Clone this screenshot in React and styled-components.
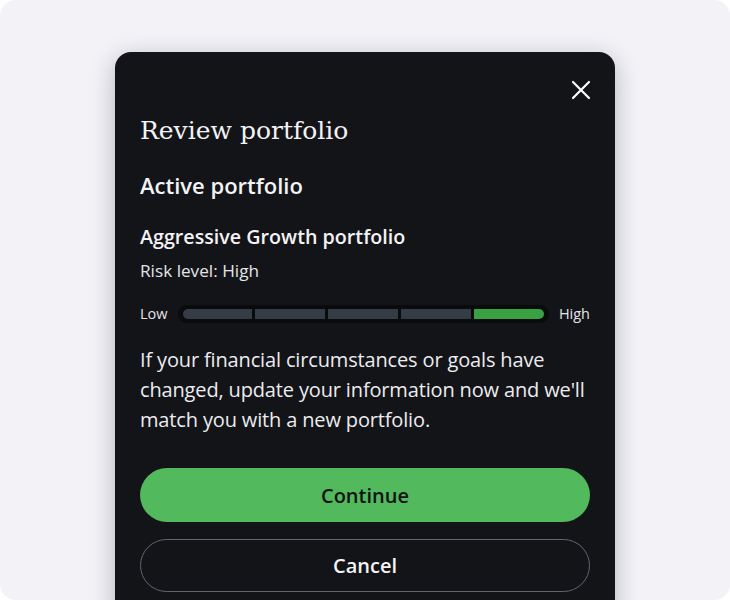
import React from "react";
import styled, { createGlobalStyle } from "styled-components";

const Global = createGlobalStyle`
  html, body { margin: 0; padding: 0; background: #ffffff; }
  * { box-sizing: border-box; }
`;

const Frame = styled.div`
  width: 730px;
  height: 600px;
  background: #f2f2f7;
  border-radius: 16px;
  overflow: hidden;
  display: flex;
  justify-content: center;
  padding-top: 52px;
  font-family: "Open Sans", "Noto Sans", sans-serif;
`;

const Card = styled.div`
  width: 500px;
  height: 600px;
  flex-shrink: 0;
  background: #131418;
  border-radius: 16px;
  padding: 28px 25px 0 25px;
  box-shadow: 0 6px 24px rgba(20, 20, 40, 0.28);
  display: flex;
  flex-direction: column;
  color: #f3f3f5;
`;

const CloseRow = styled.div`
  display: flex;
  justify-content: flex-end;
  height: 20px;
`;

const CloseButton = styled.button`
  width: 20px;
  height: 20px;
  padding: 0;
  margin: 0;
  margin-right: -1px;
  border: none;
  background: transparent;
  display: flex;
  align-items: center;
  justify-content: center;
  color: #ffffff;
  cursor: pointer;
`;

const Title = styled.h1`
  margin: 14px 0 0 0;
  font-family: "DejaVu Serif", "Liberation Serif", serif;
  font-weight: 400;
  font-size: 25px;
  line-height: 34px;
  color: #f3f3f5;
`;

const Subtitle = styled.h2`
  margin: 23px 0 0 0;
  font-size: 22px;
  line-height: 28px;
  font-weight: 600;
`;

const PortfolioName = styled.h3`
  margin: 25px 0 0 0;
  font-size: 19.7px;
  line-height: 26px;
  font-weight: 600;
`;

const RiskText = styled.div`
  margin-top: 10px;
  font-size: 17.2px;
  line-height: 22px;
  color: #e4e4e8;
`;

const MeterRow = styled.div`
  margin-top: 23px;
  display: flex;
  align-items: center;
  gap: 10px;
  height: 18px;
`;

const MeterLabel = styled.span`
  font-size: 14.5px;
  line-height: 18px;
  color: #e4e4e8;
`;

const Track = styled.div`
  flex: 1;
  height: 18px;
  border-radius: 9px;
  background: #0a0b0d;
  padding: 4px 5px;
  display: flex;
  gap: 3px;
`;

const Segment = styled.div`
  flex: 1;
  height: 10px;
  background: ${(p) => (p.$active ? "#3aa142" : "#363c46")};
  border-radius: ${(p) => (p.$first ? "5px 0 0 5px" : p.$last ? "0 5px 5px 0" : "0")};
`;

const Paragraph = styled.p`
  margin: 22px 0 0 0;
  font-size: 20px;
  letter-spacing: -0.15px;
  line-height: 30px;
  color: #ececef;
`;

const PrimaryButton = styled.button`
  margin-top: 33px;
  height: 54px;
  width: 100%;
  border: none;
  border-radius: 27px;
  background: #52b95c;
  color: #111214;
  font-family: "Open Sans", "Noto Sans", sans-serif;
  font-size: 20px;
  font-weight: 600;
  cursor: pointer;
`;

const SecondaryButton = styled.button`
  margin-top: 17px;
  height: 53px;
  width: 100%;
  border: 1px solid #5f6672;
  border-radius: 27px;
  background: transparent;
  color: #f3f3f5;
  font-family: "Open Sans", "Noto Sans", sans-serif;
  font-size: 20px;
  font-weight: 600;
  cursor: pointer;
`;

const segments = [0, 1, 2, 3, 4];

export default function App() {
  return (
    <>
      <Global />
      <Frame>
        <Card>
          <CloseRow>
            <CloseButton aria-label="Close">
              <svg width="20" height="20" viewBox="0 0 20 20" fill="none">
                <path d="M2 2L18 18M18 2L2 18" stroke="currentColor" strokeWidth="2.2" strokeLinecap="round" />
              </svg>
            </CloseButton>
          </CloseRow>
          <Title>Review portfolio</Title>
          <Subtitle>Active portfolio</Subtitle>
          <PortfolioName>Aggressive Growth portfolio</PortfolioName>
          <RiskText>Risk level: High</RiskText>
          <MeterRow>
            <MeterLabel>Low</MeterLabel>
            <Track>
              {segments.map((i) => (
                <Segment key={i} $first={i === 0} $last={i === 4} $active={i === 4} />
              ))}
            </Track>
            <MeterLabel>High</MeterLabel>
          </MeterRow>
          <Paragraph>
            If your financial circumstances or goals have changed, update your information now and we'll match you with a new portfolio.
          </Paragraph>
          <PrimaryButton>Continue</PrimaryButton>
          <SecondaryButton>Cancel</SecondaryButton>
        </Card>
      </Frame>
    </>
  );
}
